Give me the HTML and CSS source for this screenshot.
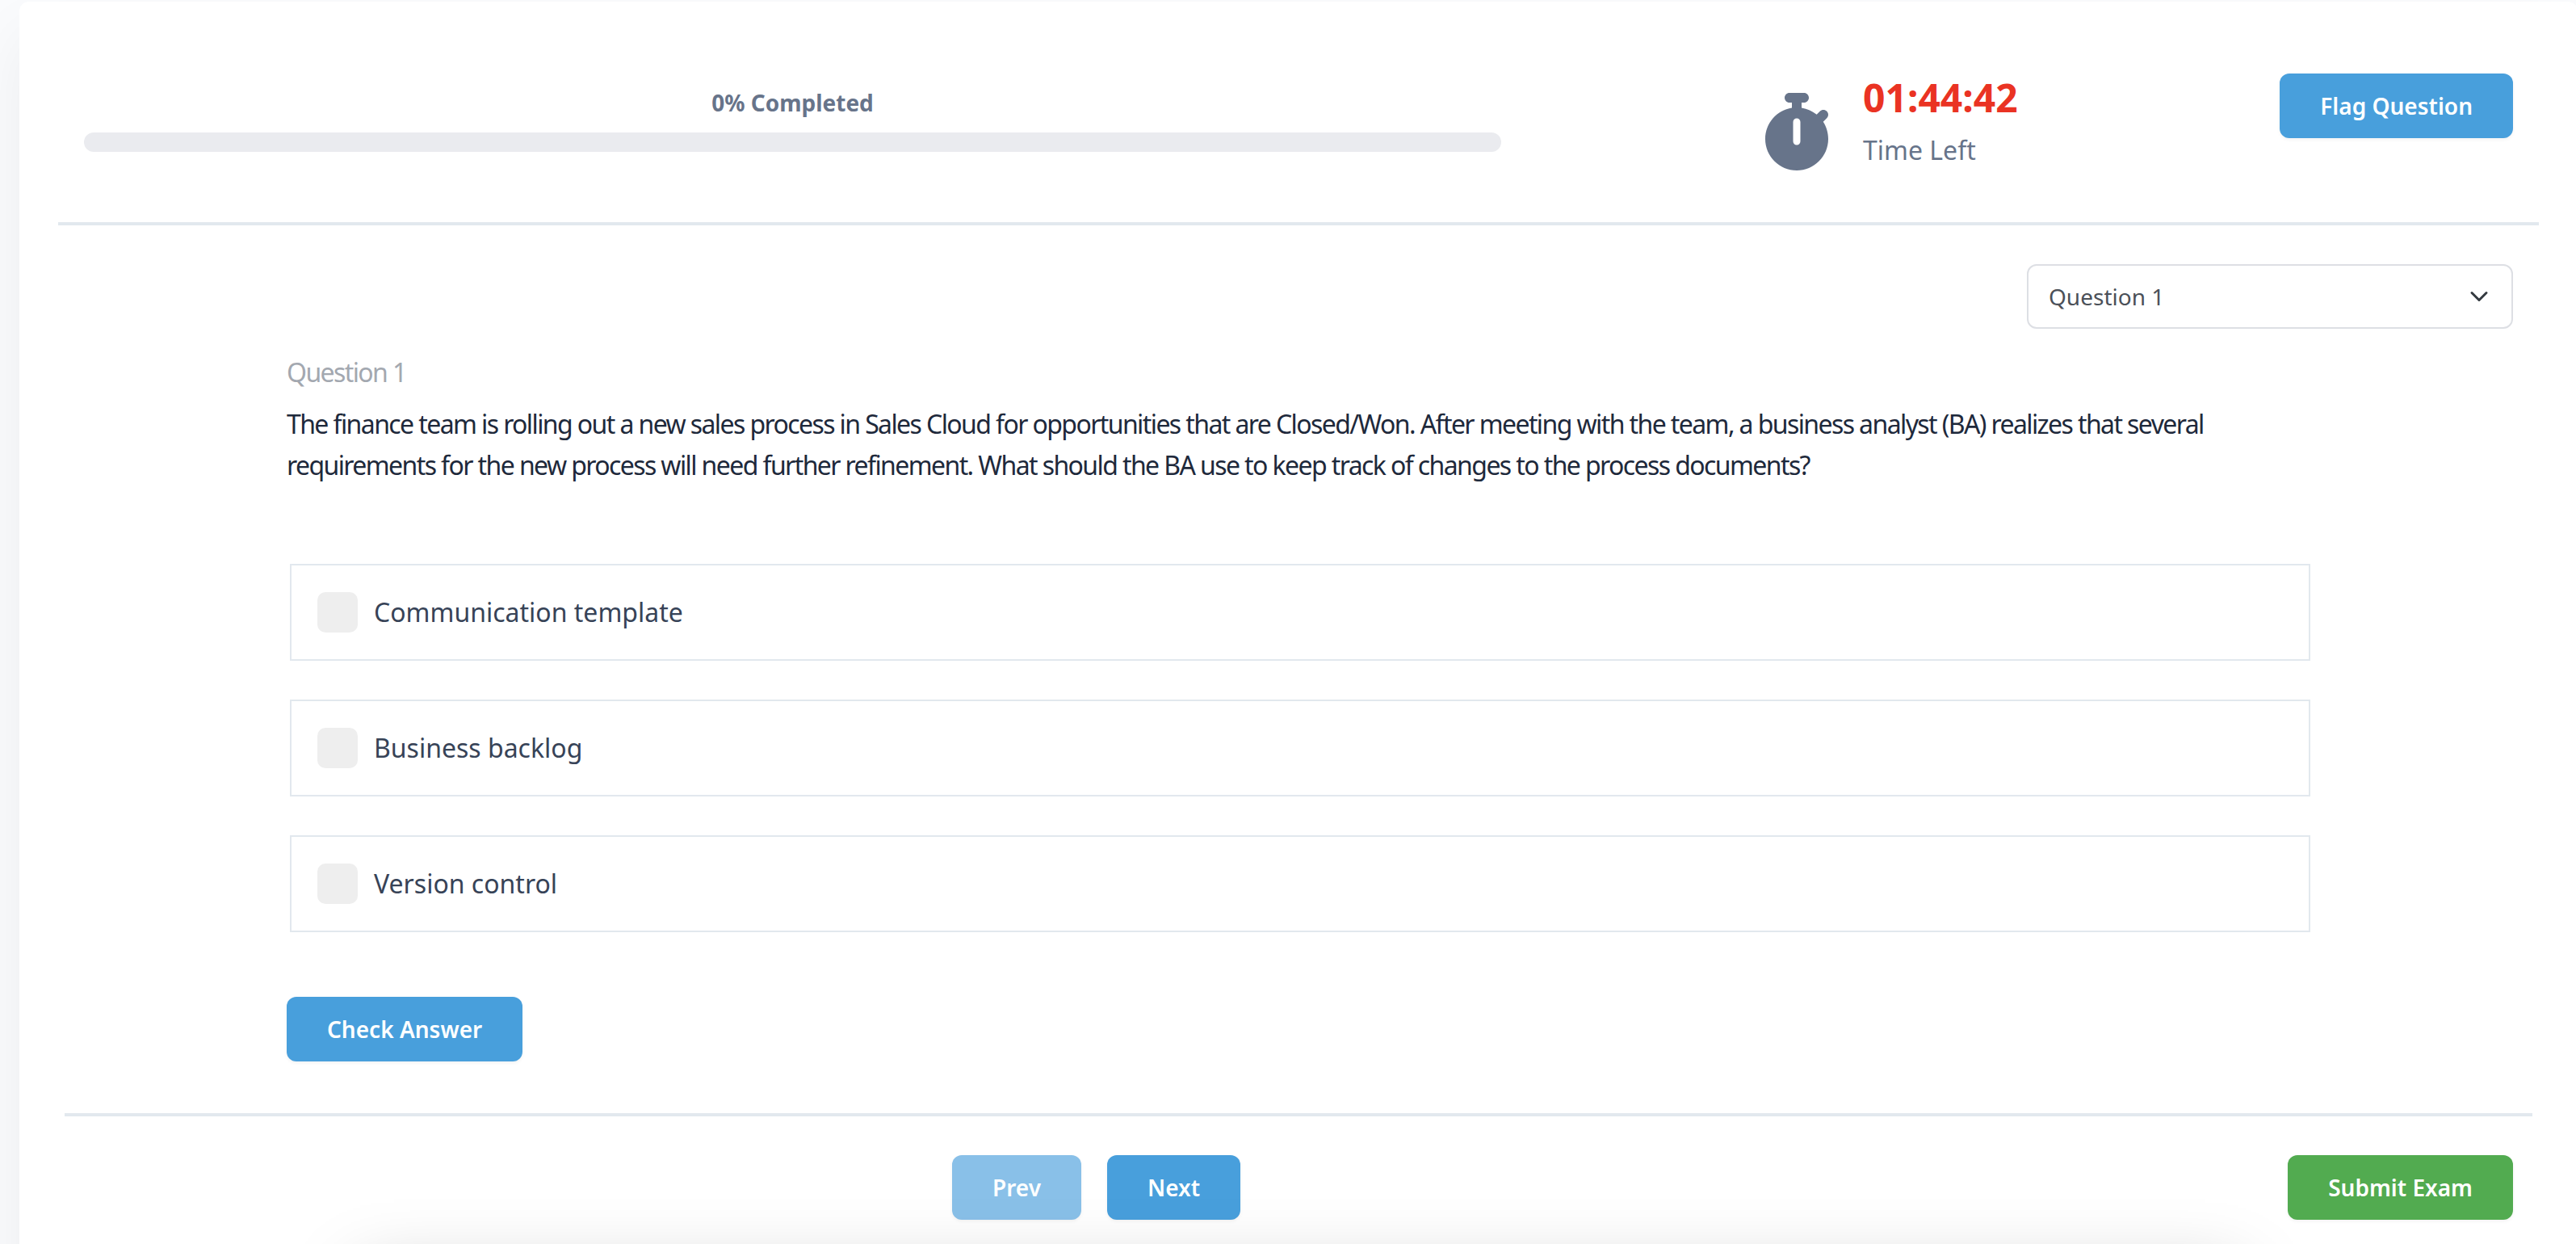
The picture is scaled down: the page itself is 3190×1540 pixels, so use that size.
FILE: index.html
```html
<!DOCTYPE html>
<html lang="en">
<head>
    <meta charset="UTF-8">
    <meta name="viewport" content="width=device-width, initial-scale=1.0">
    <title>Practice Exam</title>
    <link rel="stylesheet" href="styles.css">
</head>
<body>

<div class="exam-card">
    <div class="exam-header">
        <div class="progress-section">
            <div class="progress-label">0% Completed</div>
            <div class="progress"></div>
        </div>
        <div class="timer">
            <svg class="timer-icon" viewBox="0 0 448 512" fill="currentColor">
                <path d="M176 0c-17.7 0-32 14.3-32 32s14.3 32 32 32h16v34.4C92.3 113.8 16 200 16 304c0 114.9 93.1 208 208 208s208-93.1 208-208c0-41.8-12.3-80.7-33.5-113.2l24.1-24.1c12.5-12.5 12.5-32.8 0-45.3s-32.8-12.5-45.3 0L355.7 143c-28.1-23-62.2-38.8-99.7-44.6V64h16c17.7 0 32-14.3 32-32s-14.3-32-32-32h-96zm72 192v128c0 13.3-10.7 24-24 24s-24-10.7-24-24V192c0-13.3 10.7-24 24-24s24 10.7 24 24z"/>
            </svg>
            <div class="timer-text">
                <div class="time">01:44:42</div>
                <div class="time-label">Time Left</div>
            </div>
        </div>
        <button class="btn" type="button">Flag Question</button>
    </div>

    <div class="question-nav">
        <div class="select">
            <span>Question 1</span>
            <svg class="select-arrow" viewBox="0 0 16 16">
                <path d="m2 5 6 6 6-6"/>
            </svg>
        </div>
    </div>

    <div class="question">
        <div class="question-number">Question 1</div>
        <div class="question-text">The finance team is rolling out a new sales process in Sales Cloud for opportunities that are Closed/Won. After meeting with the team, a business analyst (BA) realizes that several requirements for the new process will need further refinement. What should the BA use to keep track of changes to the process documents?</div>
        <div class="options">
            <label class="option"><span class="checkmark"></span>Communication template</label>
            <label class="option"><span class="checkmark"></span>Business backlog</label>
            <label class="option"><span class="checkmark"></span>Version control</label>
        </div>
        <button class="btn" type="button">Check Answer</button>
    </div>

    <div class="exam-footer">
        <div class="pager">
            <button class="btn btn-disabled" type="button">Prev</button>
            <button class="btn" type="button">Next</button>
        </div>
        <button class="btn btn-success" type="button">Submit Exam</button>
    </div>
</div>

<div class="bottom-panel"></div>

</body>
</html>
```
FILE: styles.css
```css
* {
    box-sizing: border-box;
}
body {
    font-family: "Noto Sans", sans-serif;
    margin: 0;
    height: 100vh;
    overflow: hidden;
    background-color: #fafbfd;
}
.exam-card {
    width: 3168px;
    height: 1700px;
    margin: 2px 0 0 24px;
    padding: 0 48px;
    background-color: #fff;
    border-radius: 12px;
    box-shadow: 0 40px 80px rgba(0, 0, 0, 0.06);
}

/* header */
.exam-header {
    display: flex;
    align-items: flex-start;
    height: 277px;
    padding: 89px 32px 0;
    border-bottom: 4px solid #e2e8ee;
}
.progress-section {
    width: 1755px;
    padding-top: 15px;
}
.progress-label {
    margin-bottom: 16px;
    font-size: 28px;
    font-weight: 700;
    line-height: 42px;
    text-align: center;
    color: #67748a;
}
.progress {
    height: 24px;
    border-radius: 12px;
    background-color: #eaebef;
}
.timer {
    display: flex;
    margin-left: 324px;
    color: #67748a;
}
.timer-icon {
    width: 84px;
    height: 96px;
    margin: 24px 40px 0 0;
}
.timer-text {
    padding-top: 1px;
}
.time {
    margin-bottom: 12px;
    font-size: 48px;
    font-weight: 700;
    line-height: 58px;
    color: #ea3323;
}
.time-label {
    font-size: 32px;
    line-height: 48px;
}
.exam-header .btn {
    margin-left: auto;
}

.btn {
    height: 80px;
    padding: 0 50px;
    border: none;
    border-radius: 12px;
    font-family: inherit;
    font-size: 28px;
    font-weight: 600;
    color: #fff;
    background-color: #489fdc;
    box-shadow: 0 2px 4px rgba(0, 0, 0, 0.05);
    cursor: pointer;
}
.btn-disabled {
    background-color: #89c0e8;
}
.btn-success {
    background-color: #52ab50;
}

/* question dropdown */
.question-nav {
    display: flex;
    justify-content: flex-end;
    padding: 48px 32px 0;
}
.select {
    display: flex;
    align-items: center;
    justify-content: space-between;
    width: 602px;
    height: 80px;
    padding: 0 28px 0 25px;
    border: 2px solid #dddfe4;
    border-radius: 12px;
    font-size: 28px;
    color: #4b5058;
}
.select-arrow {
    width: 24px;
    height: 24px;
    fill: none;
    stroke: #343a40;
    stroke-width: 2;
    stroke-linecap: round;
    stroke-linejoin: round;
}

/* question */
.question {
    height: 971px;
    padding: 28px 283px 0;
    font-size: 32px;
    line-height: 51px;
}
.question-number {
    margin-bottom: 13px;
    letter-spacing: -1.6px;
    color: #a3a8b0;
}
.question-text {
    letter-spacing: -1.6px;
    color: #1e293b;
}
.options {
    display: flex;
    flex-direction: column;
    gap: 48px;
    margin: 97px 0 80px 4px;
}
.option {
    display: flex;
    align-items: center;
    gap: 20px;
    height: 120px;
    padding-left: 32px;
    border: 2px solid #e2e8ee;
    line-height: 50px;
    color: #374357;
}
.checkmark {
    width: 50px;
    height: 50px;
    border-radius: 10px;
    background-color: #eee;
}

/* footer */
.exam-footer {
    display: flex;
    justify-content: space-between;
    margin: 0 8px;
    padding: 48px 24px 0 1099px;
    border-top: 4px solid #e2e8ee;
}
.pager {
    display: flex;
    gap: 32px;
}

.bottom-panel {
    position: fixed;
    top: 1580px;
    left: 446px;
    width: 2326px;
    height: 400px;
    box-shadow: 0 0 84px rgba(0, 0, 0, 0.25);
    pointer-events: none;
}
```
